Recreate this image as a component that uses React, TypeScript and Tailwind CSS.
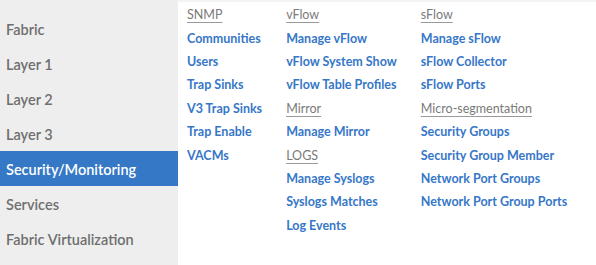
import React from 'react';

type Item = { label: string; header?: boolean };

const sideItems = [
    'Fabric',
    'Layer 1',
    'Layer 2',
    'Layer 3',
    'Security/Monitoring',
    'Services',
    'Fabric Virtualization',
];

const columns: Item[][] = [
    [
        { label: 'SNMP', header: true },
        { label: 'Communities' },
        { label: 'Users' },
        { label: 'Trap Sinks' },
        { label: 'V3 Trap Sinks' },
        { label: 'Trap Enable' },
        { label: 'VACMs' },
    ],
    [
        { label: 'vFlow', header: true },
        { label: 'Manage vFlow' },
        { label: 'vFlow System Show' },
        { label: 'vFlow Table Profiles' },
        { label: 'Mirror', header: true },
        { label: 'Manage Mirror' },
        { label: 'LOGS', header: true },
        { label: 'Manage Syslogs' },
        { label: 'Syslogs Matches' },
        { label: 'Log Events' },
    ],
    [
        { label: 'sFlow', header: true },
        { label: 'Manage sFlow' },
        { label: 'sFlow Collector' },
        { label: 'sFlow Ports' },
        { label: 'Micro-segmentation', header: true },
        { label: 'Security Groups' },
        { label: 'Security Group Member' },
        { label: 'Network Port Groups' },
        { label: 'Network Port Group Ports' },
    ],
];

export default function App() {
    return (
        <div
            className="w-[596px] h-[265px] flex bg-white overflow-hidden"
            style={{ fontFamily: 'Lato, "Open Sans", sans-serif' }}
        >
            {/* Sidebar */}
            <div className="w-[178px] h-full bg-[#eeeeee] pt-[11px] flex flex-col">
                {sideItems.map((s) => (
                    <div
                        key={s}
                        className={
                            s === 'Security/Monitoring'
                                ? 'h-[35px] flex items-center pl-[6px] pt-[2px] text-[14.5px] font-semibold bg-[#3478c6] text-white'
                                : 'h-[35px] flex items-center pl-[6px] pt-[2px] text-[14.5px] font-semibold text-[#6e6e6e]'
                        }
                    >
                        {s}
                    </div>
                ))}
            </div>

            {/* Menu panel */}
            <div className="flex-1 h-full border-t-2 border-[#f3f3f3] flex gap-6 pl-[9px] pt-[2px]">
                {columns.map((col, i) => (
                    <div key={i} className="flex flex-col">
                        {col.map((it) => (
                            <div
                                key={it.label}
                                className={
                                    it.header
                                        ? 'h-[23.4px] flex items-center text-[12.5px] text-[#7a7a7a] underline underline-offset-[3px] decoration-[#9a9a9a] whitespace-nowrap'
                                        : 'h-[23.4px] flex items-center text-[12.5px] font-bold text-[#3677c8] whitespace-nowrap'
                                }
                            >
                                {it.label}
                            </div>
                        ))}
                    </div>
                ))}
            </div>
        </div>
    );
}
